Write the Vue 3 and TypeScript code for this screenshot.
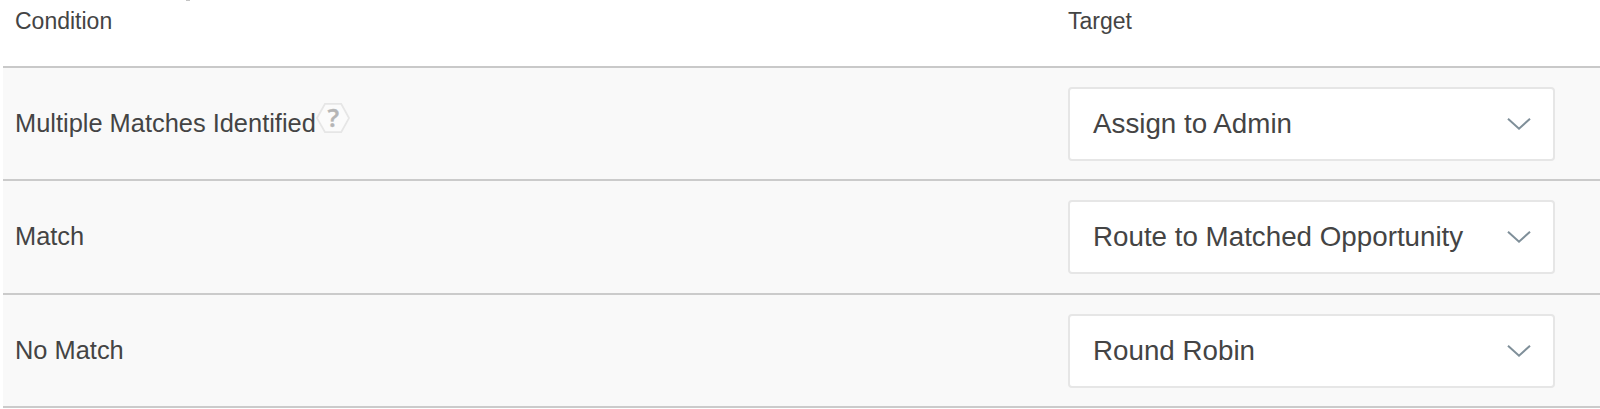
<script setup lang="ts">
interface Rule {
  condition: string
  target: string
  help?: boolean
}

const rules: Rule[] = [
  { condition: 'Multiple Matches Identified', target: 'Assign to Admin', help: true },
  { condition: 'Match', target: 'Route to Matched Opportunity' },
  { condition: 'No Match', target: 'Round Robin' },
]
</script>

<template>
  <main class="routing">
    <i class="speck"></i>
    <header class="head">
      <span>Condition</span>
      <span>Target</span>
    </header>
    <section v-for="rule in rules" :key="rule.condition" class="row">
      <div class="condition">
        <span>{{ rule.condition }}</span>
        <svg v-if="rule.help" class="help" width="34" height="32" viewBox="0 0 34 32">
          <path d="M9 1.8H25.2L33 16.1L25.2 30.2H9L1 16.1Z" />
          <text x="17.3" y="25" text-anchor="middle">?</text>
        </svg>
      </div>
      <button class="select" type="button">
        <span>{{ rule.target }}</span>
        <svg class="chevron" width="26" height="16" viewBox="0 0 26 16">
          <path d="M2 2.7L13 12.7L24 2.7" />
        </svg>
      </button>
    </section>
  </main>
</template>

<style>
body {
  background: #fff;
  overflow: hidden;
}
</style>

<style scoped>
.routing {
  position: relative;
  box-sizing: border-box;
  height: 409px;
  padding: 0 0 0 3px;
  overflow: hidden;
  color: #444;
  font-family: "Liberation Sans", Arial, sans-serif;
}
.speck {
  position: absolute;
  top: 0;
  left: 186px;
  width: 4px;
  height: 1px;
  background: #c4c4c4;
}
.head,
.row {
  display: grid;
  grid-template-columns: 1065px 487px;
  box-sizing: border-box;
}
.head {
  height: 68px;
  padding-top: 8px;
  border-bottom: 2px solid #c9c9c9;
  font-size: 23px;
  line-height: 26px;
}
.head span:first-child {
  padding-left: 12px;
}
.row {
  height: 113.45px;
  align-items: center;
  background: #f9f9f9;
  border-bottom: 2px solid #cbcbcb;
}
.condition {
  display: flex;
  align-items: center;
  padding: 0 0 1.5px 12px;
  font-size: 25.42px;
  line-height: 30px;
  white-space: nowrap;
}
.help {
  margin: -10px 0 0 -0.3px;
  flex: none;
  overflow: visible;
}
.help path {
  fill: #fbfbfb;
  stroke: #e6e6e6;
  stroke-width: 1.8;
}
.help text {
  fill: #b5b5b5;
  stroke: #b5b5b5;
  stroke-width: 0.4;
  font: 600 25.5px "Open Sans", sans-serif;
}
.select {
  display: flex;
  align-items: center;
  justify-content: space-between;
  box-sizing: border-box;
  width: 487px;
  height: 74px;
  padding: 0 21.5px 0 23px;
  border: 2px solid #e6e6e6;
  border-radius: 4px;
  background: #fff;
  color: inherit;
  font: 27.75px/32px "Liberation Sans", Arial, sans-serif;
  white-space: nowrap;
}
.chevron path {
  fill: none;
  stroke: #7f8f99;
  stroke-width: 2;
}
</style>
